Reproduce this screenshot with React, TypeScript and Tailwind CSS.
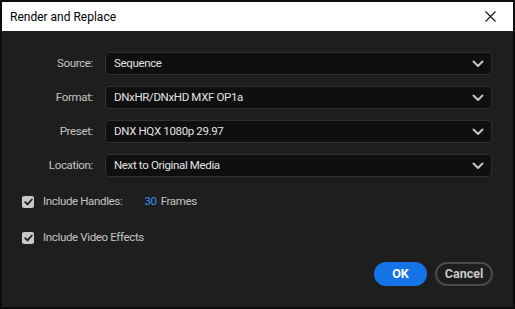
import React from "react";

function Chevron() {
  return (
    <svg width="12" height="8" viewBox="0 0 12 8" className="shrink-0">
      <path d="M1.5 1.5 L6 6 L10.5 1.5" fill="none" stroke="#c4c4c4" strokeWidth="2" strokeLinecap="round" strokeLinejoin="round" />
    </svg>
  );
}

function SelectRow({ label, value }: { label: string; value: string }) {
  return (
    <div className="flex items-center h-[23px]">
      <div className="w-[91px] text-right text-[11.5px] tracking-[-0.35px] text-[#c4c4c4]">{label}</div>
      <div className="ml-3 flex-1 h-[23px] flex items-center justify-between rounded-[4px] border border-[#2f2f2f] bg-[#0f0f0f] pl-[8px] pr-[7px]">
        <span className="text-[11.5px] tracking-[-0.35px] text-[#e2e2e2]">{value}</span>
        <Chevron />
      </div>
    </div>
  );
}

function CheckBox() {
  return (
    <div className="w-[12px] h-[12px] rounded-[2px] bg-[#c8c8c8] flex items-center justify-center shrink-0">
      <svg width="9" height="8" viewBox="0 0 9 8">
        <path d="M1.2 4.2 L3.5 6.4 L7.8 1.5" fill="none" stroke="#1e1e1e" strokeWidth="1.8" strokeLinecap="round" strokeLinejoin="round" />
      </svg>
    </div>
  );
}

export default function App() {
  return (
    <div
      className="w-[515px] h-[309px] bg-[#0c0c0c] pt-[2px] px-[2px] pb-[2px] flex flex-col"
      style={{ fontFamily: "Roboto, 'Noto Sans', sans-serif" }}
    >
      <div className="h-[29px] bg-white flex items-center justify-between pl-[8px] pr-[17px] shrink-0">
        <span className="text-[12px] text-black">Render and Replace</span>
        <svg width="11" height="11" viewBox="0 0 11 11">
          <path d="M0.5 0.5 L10.5 10.5 M10.5 0.5 L0.5 10.5" stroke="#111" strokeWidth="1.1" />
        </svg>
      </div>
      <div className="flex-1 bg-[#1e1e1e] flex flex-col pt-[21px] pr-[21px]">
        <div className="flex flex-col gap-[11px]">
          <SelectRow label="Source:" value="Sequence" />
          <SelectRow label="Format:" value="DNxHR/DNxHD MXF OP1a" />
          <SelectRow label="Preset:" value="DNX HQX 1080p 29.97" />
          <SelectRow label="Location:" value="Next to Original Media" />
        </div>
        <div className="mt-[15px] h-[20px] flex items-center pl-[20px]">
          <CheckBox />
          <span className="ml-[9px] text-[11.5px] tracking-[-0.35px] text-[#c4c4c4]">Include Handles:</span>
          <span className="ml-[22px] text-[11.5px] tracking-[-0.35px] text-[#3b8ff0]">30</span>
          <span className="ml-[4px] text-[11.5px] tracking-[-0.35px] text-[#c4c4c4]">Frames</span>
        </div>
        <div className="mt-[16px] h-[20px] flex items-center pl-[20px]">
          <CheckBox />
          <span className="ml-[9px] text-[11.5px] tracking-[-0.35px] text-[#c4c4c4]">Include Video Effects</span>
        </div>
        <div className="mt-[14px] flex justify-end items-center gap-[8px] pr-[-1px]">
          <button className="w-[53px] h-[24px] rounded-full bg-[#1473e6] text-white text-[12.5px] font-bold">OK</button>
          <button className="w-[58px] h-[24px] rounded-full border-2 border-[#4a4a4a] text-[#c8c8c8] text-[12.5px] font-bold -mr-[1px]">Cancel</button>
        </div>
      </div>
    </div>
  );
}
